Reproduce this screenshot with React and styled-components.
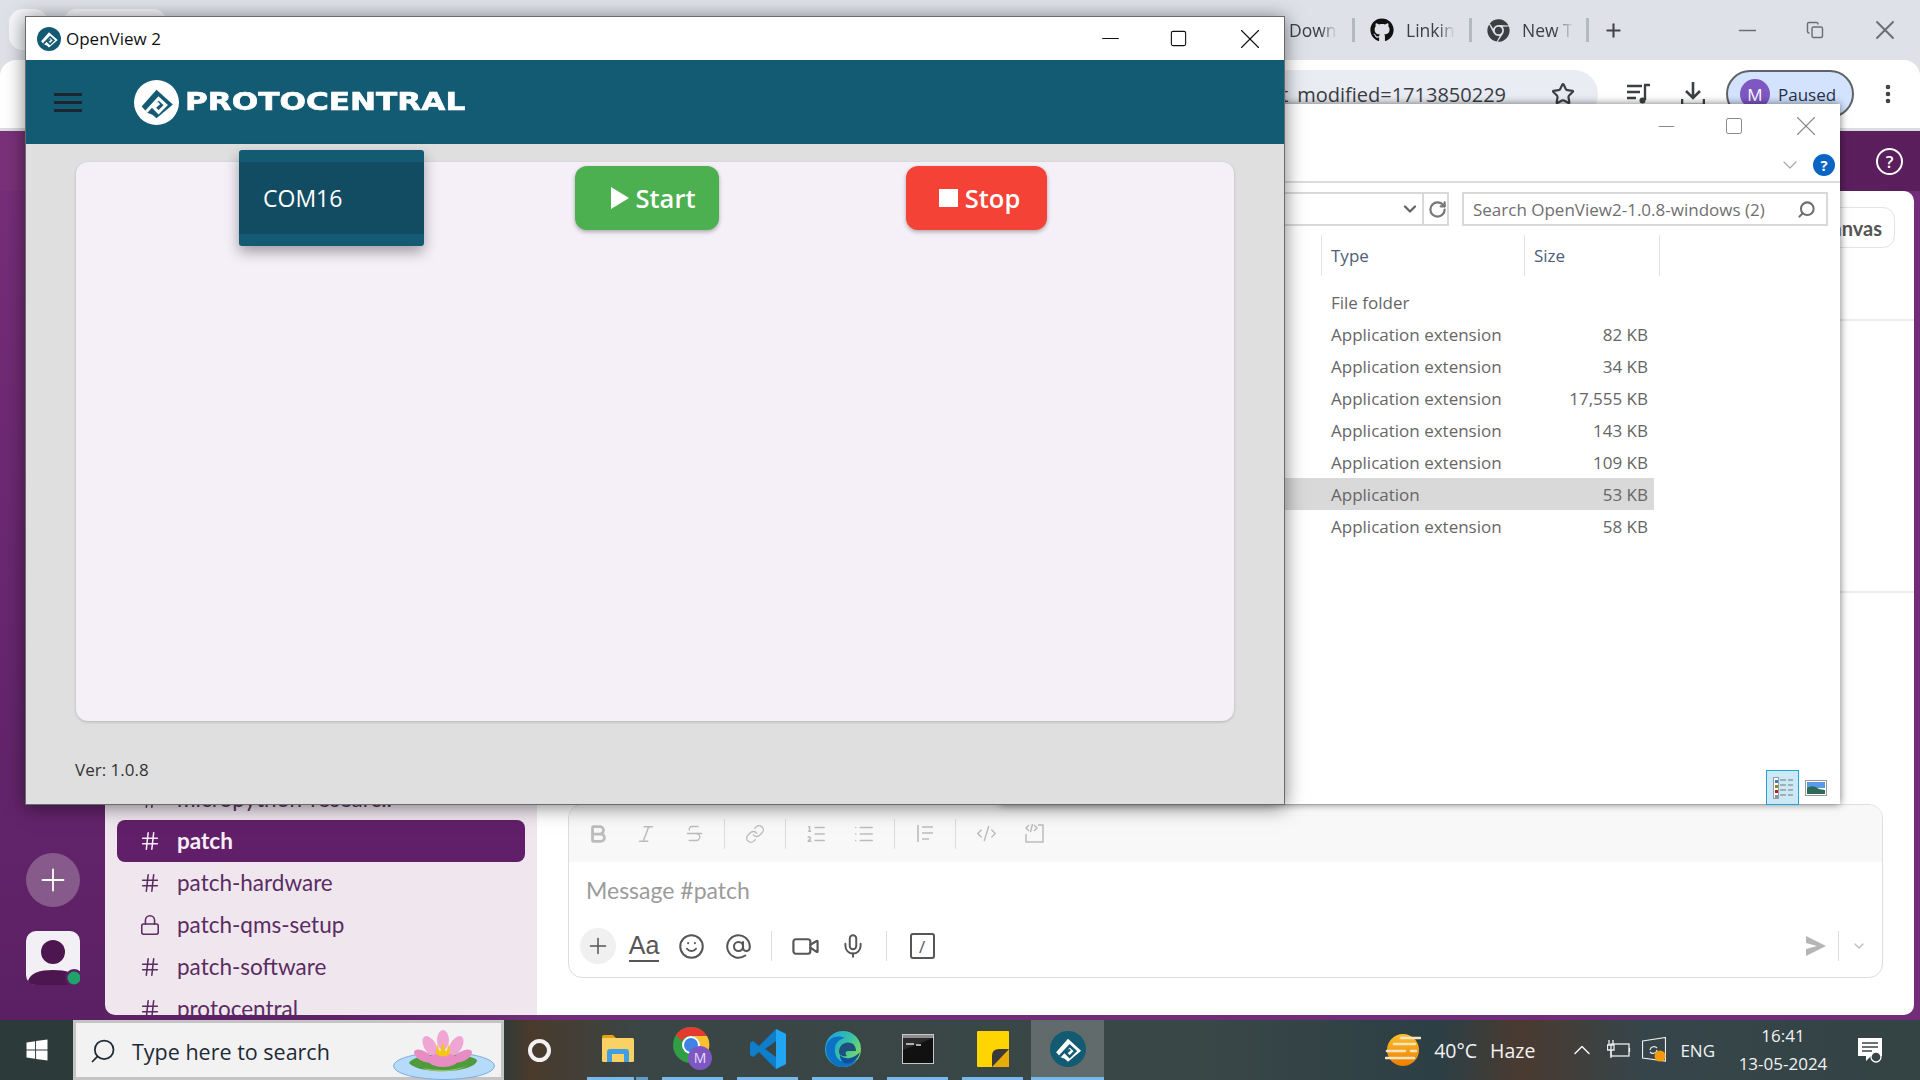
import React from "react";
import styled, { createGlobalStyle } from "styled-components";
import {
  AtSign,
  Bold,
  ChevronDown,
  ChevronUp,
  CodeXml,
  Copy,
  EllipsisVertical,
  Hash,
  Italic,
  Link,
  List,
  ListOrdered,
  Lock,
  Mic,
  Minus,
  Plus,
  RotateCw,
  Search,
  Smile,
  Square,
  Star,
  Strikethrough,
  Video,
  X,
} from "lucide-react";
import { FaChrome, FaGithub, FaWindows } from "react-icons/fa";

const GlobalStyle = createGlobalStyle`
  html, body {
    margin: 0;
    padding: 0;
    width: 1920px;
    height: 1080px;
    overflow: hidden;
    font-family: "Open Sans", sans-serif;
  }
  * { box-sizing: border-box; }
`;

const Desktop = styled.div`
  position: relative;
  width: 1920px;
  height: 1080px;
  display: flex;
  flex-direction: column;
  background: #dee1e8;
  overflow: hidden;
`;

/* browser chrome */
const TabStrip = styled.div`
  height: 60px;
  display: flex;
  align-items: center;
  color: #555a60;
`;
const PinnedTabs = styled.div`
  flex: 0 0 1289px;
  align-self: flex-start;
  display: flex;
  gap: 15px;
  padding: 9px 0 0 9px;
`;
const PinnedTab = styled.div`
  width: ${(p) => p.$w}px;
  height: 41px;
  background: #f5f6f8;
  border-radius: 14px;
`;
const Tab = styled.div`
  width: ${(p) => p.$w}px;
  display: flex;
  align-items: center;
  gap: 12px;
  padding-left: ${(p) => p.$pad || 0}px;
  font-size: 17.5px;
  color: #3c4043;
`;
const TabLabel = styled.span`
  white-space: nowrap;
  -webkit-mask-image: linear-gradient(90deg, #000 65%, transparent);
  mask-image: linear-gradient(90deg, #000 65%, transparent);
`;
const TabSep = styled.div`
  width: 3px;
  height: 24px;
  background: #b4b8bf;
`;
const NewTab = styled.div`
  margin-left: 14px;
  display: flex;
  color: #444;
`;
const WinButtons = styled.div`
  margin-left: auto;
  padding-right: 19px;
  display: flex;
  align-items: center;
  gap: 45px;
  color: #6b6f75;
`;
const Toolbar = styled.div`
  height: 71px;
  background: #fff;
  border-radius: 16px 16px 0 0;
  border-bottom: 3px solid #dadce0;
  display: flex;
  align-items: center;
  padding-left: 120px;
`;
const AddressBar = styled.div`
  width: 1478px;
  height: 48px;
  border-radius: 24px;
  background: #e9ecf2;
  display: flex;
  align-items: center;
  justify-content: flex-end;
  gap: 45px;
  padding-right: 23px;
  font-size: 20px;
  color: #3a3d42;
`;
const ToolIcon = styled.div`
  display: flex;
  margin-left: ${(p) => p.$ml}px;
  color: #3c4043;
`;
const ProfilePill = styled.div`
  margin-left: 21px;
  width: 128px;
  height: 48px;
  border-radius: 24px;
  border: 2px solid #5f6368;
  background: #d3e3fd;
  display: flex;
  align-items: center;
  gap: 8px;
  padding-left: 12px;
  font-size: 17px;
  color: #26324a;
`;
const ProfileAvatar = styled.div`
  width: 30px;
  height: 30px;
  border-radius: 50%;
  background: #7e57c2;
  color: #fff;
  font-size: 17px;
  display: flex;
  align-items: center;
  justify-content: center;
`;

/* slack page behind the windows */
const SlackBody = styled.div`
  flex: 1;
  display: flex;
  flex-direction: column;
  min-height: 0;
  background: linear-gradient(90deg, #5d2165 0, #5d2165 300px, #712d79 560px, #722c79 100%);
`;
const SlackTop = styled.div`
  height: 60px;
  display: flex;
  align-items: center;
  justify-content: flex-end;
  padding-right: 17px;
  background: linear-gradient(90deg, #7a3179 0, #7a3179 200px, #5a1e5c 100%);
  color: #fff;
`;
const HelpRing = styled.div`
  width: 27px;
  height: 27px;
  border: 2px solid #fff;
  border-radius: 50%;
  font-size: 17px;
  font-weight: 600;
  display: flex;
  align-items: center;
  justify-content: center;
`;
const SlackRow = styled.div`
  flex: 1;
  min-height: 0;
  display: flex;
  padding: 0 6px 5px 0;
`;
const Rail = styled.div`
  width: 105px;
  display: flex;
  flex-direction: column;
  justify-content: flex-end;
  gap: 24px;
  padding: 0 0 35px 26px;
  background: linear-gradient(180deg, #762e79, #5b2064);
  margin-bottom: -5px;
`;
const RailAdd = styled.div`
  width: 54px;
  height: 54px;
  border-radius: 50%;
  background: #875a8c;
  color: #fff;
  display: flex;
  align-items: center;
  justify-content: center;
`;
const Sidebar = styled.div`
  width: 432px;
  flex-shrink: 0;
  overflow: hidden;
  padding: 587px 12px 0 12px;
  background: #efe6ee;
  border-radius: 10px 0 0 10px;
  font-family: Lato, sans-serif;
  font-size: 22.5px;
  color: #5b2c62;
`;
const Channel = styled.div`
  height: 42px;
  flex-shrink: 0;
  display: flex;
  align-items: center;
  gap: 16px;
  padding: 0 0 1px 22px;
  border-radius: 8px;
  background: ${(p) => (p.$active ? "#611f69" : "transparent")};
  color: ${(p) => (p.$active ? "#f6eef6" : "inherit")};
  font-weight: ${(p) => (p.$active ? 700 : 400)};
`;
const SlackMain = styled.div`
  flex: 1;
  min-width: 0;
  display: flex;
  flex-direction: column;
  background: #fff;
  border-radius: 0 10px 10px 0;
  padding-bottom: 37px;
`;
const ChannelHeader = styled.div`
  height: 130px;
  border-bottom: 2px solid #ececec;
  display: flex;
  justify-content: flex-end;
  align-items: flex-start;
  padding: 16px 19px 0 0;
`;
const CanvasChip = styled.div`
  height: 41px;
  padding: 0 12px;
  border: 1px solid #e4e4e4;
  border-radius: 12px;
  font-family: Lato, sans-serif;
  font-size: 20px;
  font-weight: 700;
  color: #555;
  display: flex;
  align-items: center;
`;
const History = styled.div`
  height: 272px;
  border-bottom: 2px solid #ececec;
`;
const Composer = styled.div`
  margin: auto 31px 0;
  height: 174px;
  border: 1px solid #dedede;
  border-radius: 14px;
  overflow: hidden;
  display: flex;
  flex-direction: column;
`;
const FormatBar = styled.div`
  height: 57px;
  flex-shrink: 0;
  background: #f8f8f8;
  display: flex;
  align-items: center;
  padding-left: 14px;
  color: #bcbcbc;
`;
const Slots = styled.div`
  display: flex;
  align-items: center;
  gap: ${(p) => p.$gap}px;
`;
const Slot = styled.div`
  width: 30px;
  display: flex;
  justify-content: center;
`;
const VSep = styled.div`
  width: 1px;
  height: 30px;
  margin: 0 ${(p) => p.$m}px;
  background: #dcdcdc;
`;
const MessageText = styled.div`
  height: 55px;
  padding-left: 17px;
  display: flex;
  align-items: center;
  font-family: Lato, sans-serif;
  font-size: 23px;
  color: #9b9b9b;
`;
const ComposerActions = styled.div`
  flex: 1;
  display: flex;
  align-items: center;
  padding: 0 15px 2px 11px;
  color: #565656;
`;
const ComposerAdd = styled.div`
  width: 36px;
  height: 36px;
  margin-right: 13px;
  border-radius: 50%;
  background: #f0f0f0;
  display: flex;
  align-items: center;
  justify-content: center;
`;
const FontToggle = styled.span`
  font-family: "Liberation Sans", sans-serif;
  font-size: 25px;
  line-height: 29px;
  border-bottom: 2px solid #565656;
  color: #565656;
`;
const SlashBox = styled.div`
  width: 25px;
  height: 26px;
  margin-left: 4px;
  border: 2px solid #565656;
  border-radius: 3px;
  display: flex;
  align-items: center;
  justify-content: center;
  font-size: 17px;
  line-height: 1;
`;
const SendGroup = styled.div`
  margin-left: auto;
  display: flex;
  align-items: center;
  color: #bdbdbd;
`;

/* file explorer window */
const Explorer = styled.div`
  position: absolute;
  left: 1000px;
  top: 104px;
  width: 840px;
  height: 700px;
  background: #fff;
  box-shadow: 0 0 8px rgba(0, 0, 0, 0.55);
  display: flex;
  flex-direction: column;
  color: #666;
  font-size: 17px;
`;
const ExplorerTitle = styled.div`
  height: 44px;
  flex-shrink: 0;
  display: flex;
  align-items: center;
  justify-content: flex-end;
  gap: 45px;
  padding-right: 17px;
  color: #8a8a8a;
`;
const ExplorerRibbon = styled.div`
  height: 35px;
  flex-shrink: 0;
  border-bottom: 2px solid #dcdcdc;
  display: flex;
  align-items: center;
  justify-content: flex-end;
  gap: 11px;
  padding: 0 5px 0 0;
  color: #a9a9a9;
`;
const RibbonHelp = styled.div`
  width: 22px;
  height: 22px;
  border-radius: 50%;
  background: #0a64c4;
  color: #fff;
  font-size: 15px;
  font-weight: 700;
  display: flex;
  align-items: center;
  justify-content: center;
`;
const PathRow = styled.div`
  height: 34px;
  margin-top: 9px;
  flex-shrink: 0;
  display: flex;
  gap: 13px;
  padding-right: 12px;
`;
const PathBox = styled.div`
  flex: 1;
  border: 2px solid #d9d9d9;
  display: flex;
  align-items: center;
  justify-content: flex-end;
  color: #666;
`;
const PathRefresh = styled.div`
  width: 25px;
  height: 100%;
  margin-left: 2px;
  padding-left: 3px;
  border-left: 2px solid #d9d9d9;
  display: flex;
  align-items: center;
  justify-content: center;
`;
const SearchField = styled.div`
  width: 366px;
  border: 2px solid #d9d9d9;
  display: flex;
  align-items: center;
  justify-content: space-between;
  padding: 0 10px 0 9px;
  color: #6f6f6f;
  white-space: nowrap;
`;
const ColumnHeader = styled.div`
  height: 41px;
  margin-top: 9px;
  flex-shrink: 0;
  display: flex;
  color: #4c607a;
`;
const Column = styled.div`
  width: ${(p) => p.$w}px;
  padding-left: 9px;
  display: flex;
  align-items: center;
  border-left: ${(p) => (p.$plain ? "none" : "1px solid #e2e2e2")};
`;
const FileRows = styled.div`
  margin-top: 10px;
  width: 654px;
`;
const FileRow = styled.div`
  height: 32px;
  display: grid;
  grid-template-columns: 331px 1fr auto;
  align-items: center;
  padding-right: 6px;
  background: ${(p) => (p.$selected ? "#d9d9d9" : "transparent")};
`;
const ViewButtons = styled.div`
  margin-top: auto;
  margin-bottom: -1px;
  display: flex;
  justify-content: flex-end;
  align-items: center;
  gap: 6px;
  padding-right: 13px;
`;
const ViewButton = styled.div`
  width: ${(p) => (p.$on ? 33 : 22)}px;
  height: 35px;
  display: flex;
  align-items: center;
  justify-content: center;
  background: ${(p) => (p.$on ? "#cbe8f6" : "transparent")};
  border: ${(p) => (p.$on ? "1px solid #26a0da" : "none")};
`;

/* openview window */
const OpenViewWindow = styled.div`
  position: absolute;
  left: 25px;
  top: 16px;
  width: 1260px;
  height: 789px;
  border: 1px solid #6b6b6b;
  display: flex;
  flex-direction: column;
  background: #dfdfdf;
  box-shadow: 0 2px 18px rgba(0, 0, 0, 0.5);
`;
const TitleBar = styled.div`
  height: 43px;
  flex-shrink: 0;
  background: #fff;
  display: flex;
  align-items: center;
  padding-left: 11px;
  gap: 5px;
  font-size: 17px;
  color: #111;
`;
const TitleButtons = styled.div`
  margin-left: auto;
  padding-right: 17px;
  display: flex;
  align-items: center;
  gap: 45px;
  color: #111;
`;
const AppHeader = styled.div`
  height: 84px;
  flex-shrink: 0;
  background: #135a73;
  display: flex;
  align-items: center;
  padding-left: 28px;
`;
const Hamburger = styled.div`
  width: 28px;
  display: flex;
  flex-direction: column;
  gap: 5px;
`;
const HamburgerBar = styled.div`
  height: 3px;
  background: #1a2630;
`;
const Brand = styled.div`
  margin-left: 52px;
  display: flex;
  align-items: center;
  gap: 6px;
`;
const BrandName = styled.span`
  font-family: "DejaVu Sans", sans-serif;
  font-weight: 700;
  font-size: 24px;
  line-height: 1;
  color: #fff;
  -webkit-text-stroke: 0.6px #fff;
  transform: scaleX(1.297);
  transform-origin: left center;
  white-space: nowrap;
`;
const AppBody = styled.div`
  flex: 1;
  min-height: 0;
  display: flex;
  flex-direction: column;
  padding: 18px 50px 0 50px;
`;
const Card = styled.div`
  position: relative;
  height: 559px;
  flex-shrink: 0;
  background: #f5f0f8;
  border-radius: 12px;
  box-shadow: 0 1px 3px rgba(0, 0, 0, 0.2);
  padding: 4px 0 0 499px;
  display: flex;
  align-items: flex-start;
  gap: 187px;
`;
const PortMenu = styled.div`
  position: absolute;
  left: 163px;
  top: -12px;
  width: 185px;
  padding: 12px 0;
  background: #135a73;
  border-radius: 3px;
  box-shadow: 0 6px 14px rgba(0, 0, 0, 0.35);
`;
const PortItem = styled.div`
  height: 72px;
  padding-left: 24px;
  display: flex;
  align-items: center;
  background: #124c62;
  color: #fff;
  font-size: 23px;
`;
const ActionButton = styled.div`
  width: ${(p) => p.$w}px;
  height: 64px;
  padding-left: ${(p) => p.$pad}px;
  border-radius: 12px;
  background: ${(p) => p.$bg};
  box-shadow: 0 2px 4px rgba(0, 0, 0, 0.3);
  color: #fff;
  font-size: 25.5px;
  font-weight: 600;
  display: flex;
  align-items: center;
  justify-content: center;
  gap: 7px;
`;
const Version = styled.div`
  margin: auto 0 23px -1px;
  font-size: 17px;
  color: #333;
`;

/* taskbar */
const Taskbar = styled.div`
  height: 60px;
  flex-shrink: 0;
  display: flex;
  align-items: stretch;
  background: linear-gradient(90deg, #2d3a3a 0, #2e3a3a 500px, #4a3a2c 530px, #3a4646 640px, #3a4747 1200px, #2c3f45 1440px, #4a3a30 1520px, #36454a 1640px, #344444 100%);
  color: #f2f2f2;
`;
const StartButton = styled.div`
  width: 73px;
  display: flex;
  align-items: center;
  justify-content: center;
  color: #fff;
`;
const TaskSearch = styled.div`
  width: 431px;
  border: 3px solid #c4c4c4;
  background: #f2f2f2;
  display: flex;
  align-items: center;
  gap: 15px;
  padding: 2px 0 0 13px;
  font-size: 21.5px;
  color: #1e2a36;
  position: relative;
`;
const Lily = styled.svg`
  position: absolute;
  right: 6px;
  bottom: -3px;
`;
const Cortana = styled.div`
  width: 83px;
  display: flex;
  align-items: center;
  padding-left: 24px;
`;
const CortanaRing = styled.div`
  width: 23px;
  height: 23px;
  border: 4px solid #f2f2f2;
  border-radius: 50%;
`;
const TaskApps = styled.div`
  display: flex;
  gap: 14px;
`;
const TaskApp = styled.div`
  width: ${(p) => (p.$active ? 73 : 61)}px;
  margin-left: ${(p) => (p.$active ? -6 : 0)}px;
  display: flex;
  flex-direction: column;
  background: ${(p) => (p.$active ? "rgba(255,255,255,0.2)" : "transparent")};
`;
const TaskIcon = styled.div`
  flex: 1;
  display: flex;
  align-items: center;
  justify-content: center;
`;
const TaskUnderline = styled.div`
  height: 3px;
  background: ${(p) =>
    p.$split
      ? "linear-gradient(90deg, #76b9ed 47px, transparent 47px, transparent 49px, #5f9cc9 49px)"
      : "#76b9ed"};
`;
const Tray = styled.div`
  margin-left: auto;
  padding-right: 38px;
  display: flex;
  align-items: center;
  font-size: 19.5px;
`;
const Weather = styled.div`
  display: flex;
  align-items: center;
  gap: 13px;
  margin-right: 33px;
`;
const TrayIcons = styled.div`
  display: flex;
  align-items: center;
  gap: 11px;
  margin-right: 14px;
`;
const Lang = styled.span`
  font-size: 17px;
  margin-right: 21px;
`;
const Clock = styled.div`
  width: 94px;
  margin-right: 28px;
  text-align: center;
  font-size: 17px;
  line-height: 28px;
`;

/* the drawn marks */
const ProtoMark = ({ size, bg, fg }) => (
  <svg width={size} height={size} viewBox="0 0 44 44">
    <circle cx="22" cy="22" r="22" fill={bg} />
    <path d="M7.5 26 L22 9.5 L38 24 L22 37.5 L18 34 L13 32Z" fill={fg} />
    <path d="M12 31 L24 18 L31 24.5 L24 31.5 L19.5 27 L24.5 22.5" fill="none" stroke={bg} strokeWidth="3" />
  </svg>
);

const ChromeBadge = () => (
  <svg width="40" height="44" viewBox="0 0 40 44">
    <circle cx="18" cy="18" r="18" fill="#2f9e44" />
    <path d="M18 0 A18 18 0 0 1 34 9 L18 9 A9 9 0 0 0 9 14 L3 8 A18 18 0 0 1 18 0Z" fill="#e53a2f" />
    <path d="M34 9 A18 18 0 0 1 24 35 L26 22 A9 9 0 0 0 18 9Z" fill="#fbc02d" />
    <circle cx="18" cy="18" r="9" fill="#fff" />
    <circle cx="18" cy="18" r="7" fill="#3f83e6" />
    <circle cx="27" cy="31" r="12" fill="#7e57c2" />
    <text x="27" y="36" textAnchor="middle" fontSize="14" fontFamily="Open Sans" fill="#e8dcf8">M</text>
  </svg>
);

const VsCodeMark = () => (
  <svg width="36" height="42" viewBox="0 0 36 42">
    <path d="M26 1 L9 18 L3 13 L0 15 V27 L3 29 L9 24 L26 41 L36 36 V6 Z" fill="#0f7fcc" />
    <path d="M26 13 L15 21 L26 29 Z" fill="#394646" />
    <path d="M26 1 L36 6 V36 L26 41 Z" fill="#20a6f3" />
  </svg>
);

const EdgeMark = () => (
  <svg width="36" height="38" viewBox="0 0 36 38">
    <defs>
      <linearGradient id="edgeTop" x1="0" y1="0" x2="1" y2="0.6">
        <stop offset="0" stopColor="#1b9de2" />
        <stop offset="0.6" stopColor="#35c1a8" />
        <stop offset="1" stopColor="#7ddb5f" />
      </linearGradient>
    </defs>
    <circle cx="18" cy="19" r="18" fill="url(#edgeTop)" />
    <path d="M1 19 C1 8 12 4 20 8 C13 9 9 15 10 22 C11 31 21 36 33 29 C29 34 24 37 18 37 C8 37 1 29 1 19Z" fill="#0c72c8" />
    <path d="M14 22 C14 15 20 11 26 13 C29 14 31 17 31 21 H23 C20 21 20 24 22 26 C18 27 14 25 14 22Z" fill="#1f4f7c" />
    <path d="M15 25 C20 31 30 28 35 22 C33 30 26 35 19 33 C16 31 15 28 15 25Z" fill="#0f4f9c" />
  </svg>
);

const ConsoleMark = () => (
  <svg width="32" height="30" viewBox="0 0 32 30">
    <rect x="0.5" y="0.5" width="31" height="29" fill="#111" stroke="#c8c8c8" />
    <rect x="1" y="1" width="30" height="3" fill="#8d8d8d" />
    <path d="M1 4 H31 L1 16Z" fill="#2b2b2b" />
    <path d="M4 10 H12 M14 11 H19" stroke="#ddd" strokeWidth="1.5" />
  </svg>
);

const StickyMark = () => (
  <svg width="32" height="36" viewBox="0 0 32 36">
    <path d="M1 0 H31 a1 1 0 0 1 1 1 V35 a1 1 0 0 1 -1 1 H1 a1 1 0 0 1 -1 -1 V1 a1 1 0 0 1 1 -1Z" fill="#ffd500" />
    <path d="M32 18 V35 a1 1 0 0 1 -1 1 H15 V25Z" fill="#e8ac08" />
    <path d="M32 18 L15 36 V25 Q15 18 22 18Z" fill="#3a3a3a" />
  </svg>
);

const FolderMark = () => (
  <svg width="32" height="28" viewBox="0 0 32 28">
    <path d="M0 2 Q0 0 2 0 H11 L14 3 H3 V6 H0Z" fill="#e5a50a" />
    <rect x="0" y="3" width="32" height="24" rx="1.5" fill="#fad165" />
    <path d="M5 27 V17 Q5 14 8 14 H24 Q27 14 27 17 V27 H22 V19 H10 V27Z" fill="#3f9fe0" />
  </svg>
);

const LilyMark = () => (
  <Lily width="102" height="50" viewBox="0 0 102 50">
    <ellipse cx="51" cy="36" rx="50.5" ry="13.5" fill="#b6dafa" stroke="#7aaede" />
    <path d="M16 33 C22 22 74 22 84 30 C84 36 70 41 50 41 C32 41 20 38 16 33Z" fill="#4f9a3a" />
    <path d="M30 38 C44 41 64 41 74 35 C66 42 40 44 30 38Z" fill="#8fc46a" />
    <g fill="#f0a6d4">
      <ellipse cx="50" cy="10" rx="6" ry="10" />
      <ellipse cx="37" cy="16" rx="6" ry="11" transform="rotate(-30 37 16)" />
      <ellipse cx="63" cy="16" rx="6" ry="11" transform="rotate(30 63 16)" />
    </g>
    <g fill="#e88cc4">
      <ellipse cx="30" cy="26" rx="5" ry="10" transform="rotate(-60 30 26)" />
      <ellipse cx="70" cy="26" rx="5" ry="10" transform="rotate(60 70 26)" />
      <ellipse cx="50" cy="30" rx="15" ry="7" />
    </g>
    <path d="M43 24 L44 14 L47 22 L50 12 L53 22 L56 14 L57 24 Q50 29 43 24Z" fill="#f5c518" />
  </Lily>
);

const SunMark = () => (
  <svg width="36" height="36" viewBox="0 0 36 36">
    <defs>
      <linearGradient id="sunFill" x1="0" y1="0" x2="0" y2="1">
        <stop offset="0" stopColor="#fbc02d" />
        <stop offset="1" stopColor="#ef7d00" />
      </linearGradient>
    </defs>
    <circle cx="18" cy="18" r="16" fill="url(#sunFill)" />
    <g stroke="#f6e4c0" strokeWidth="2.6" strokeLinecap="round">
      <path d="M16 6 H35" />
      <path d="M9 12 H30" />
      <path d="M2 19 H20 M26 19 H31" />
      <path d="M1 26 H29" />
    </g>
  </svg>
);

const BatteryMark = () => (
  <svg width="24" height="20" viewBox="0 0 24 20" fill="none" stroke="#eee" strokeWidth="1.3">
    <rect x="4" y="4" width="18" height="12" />
    <path d="M22.5 8 V12 M2 0 V5 M6 0 V5 M0.5 5 H7 V10 H0.5Z M4 10 V18" />
  </svg>
);

const SyncMark = () => (
  <svg width="24" height="26" viewBox="0 0 24 26" fill="none" stroke="#eee" strokeWidth="1.2">
    <path d="M0.5 4 L23.5 0.5 V24 L0.5 21Z" />
    <path d="M8 13 a4 4 0 0 1 7 -2 M15 13 a4 4 0 0 1 -7 2" />
    <circle cx="18" cy="19" r="5.5" fill="#f59a0c" stroke="none" />
  </svg>
);

const NoticeMark = () => (
  <svg width="24" height="25" viewBox="0 0 24 25">
    <path d="M0 0 H24 V18 H13 L8 23 V18 H0Z" fill="#fff" />
    <path d="M4 5 H20 M4 9 H20 M4 13 H14" stroke="#3a4646" strokeWidth="1.5" />
    <circle cx="18" cy="19" r="5" fill="#3a4646" stroke="#fff" strokeWidth="1.3" />
  </svg>
);

const PersonMark = () => (
  <svg width="54" height="54" viewBox="0 0 54 54">
    <rect width="54" height="54" rx="10" fill="#f3f0f5" />
    <circle cx="27" cy="21" r="12" fill="#4e1650" />
    <path d="M2 50 C4 42 14 39 27 39 C40 39 50 42 52 50 Q50 54 44 54 H10 Q4 54 2 50Z" fill="#4e1650" />
    <circle cx="48" cy="47" r="9" fill="#5b2064" />
    <circle cx="48" cy="47" r="6.5" fill="#1fa36a" />
  </svg>
);

const SendMark = () => (
  <svg width="20" height="20" viewBox="0 0 20 20">
    <path d="M0 0 L20 10 L0 20 V13 L11 10 L0 7Z" fill="#b5b5b5" />
  </svg>
);

const MusicQueueMark = () => (
  <svg width="24" height="24" viewBox="0 0 24 24" fill="none" stroke="#3c4043" strokeWidth="2.4">
    <path d="M0 4 H15 M0 10 H13 M0 16 H9 M18 3 V18 M17 3 H23" />
    <circle cx="15.5" cy="18.5" r="3" fill="#3c4043" stroke="none" />
  </svg>
);

const QuoteMark = () => (
  <svg width="21" height="21" viewBox="0 0 21 21" fill="none" stroke="currentColor" strokeWidth="1.6">
    <path d="M3 2 V19 M7 4 H18 M7 10 H18 M7 16 H14" />
  </svg>
);

const DetailsMark = () => (
  <svg width="20" height="22" viewBox="0 0 20 22">
    <rect x="0.5" y="0.5" width="5" height="21" fill="#fff" stroke="#9a9a9a" />
    <path d="M2 3 h3 v3 h-3z" fill="#3a7fc4" />
    <path d="M2 8 h3 v3 h-3z" fill="#8a8a20" />
    <path d="M2 13 h3 v3 h-3z" fill="#b82020" />
    <path d="M2 18 h3 v3 h-3z" fill="#70a0a0" />
    <path d="M7 3 H13 M15 3 H20 M7 8 H13 M15 8 H20 M7 13 H13 M15 13 H20 M7 18 H13 M15 18 H20" stroke="#777" strokeWidth="1.2" />
  </svg>
);

const PreviewMark = () => (
  <svg width="22" height="16" viewBox="0 0 22 16">
    <rect x="0.5" y="0.5" width="21" height="15" fill="#fff" stroke="#9a9a9a" />
    <rect x="2" y="2" width="18" height="6" fill="#5b9be6" />
    <path d="M2 8 Q8 4 14 9 L20 10 V14 H2Z" fill="#2d6a5a" />
  </svg>
);

const fileRows = [
  { type: "File folder", size: "" },
  { type: "Application extension", size: "82 KB" },
  { type: "Application extension", size: "34 KB" },
  { type: "Application extension", size: "17,555 KB" },
  { type: "Application extension", size: "143 KB" },
  { type: "Application extension", size: "109 KB" },
  { type: "Application", size: "53 KB", selected: true },
  { type: "Application extension", size: "58 KB" },
];

const channels = [
  { name: "micropython-researc..", icon: Hash },
  { name: "patch", icon: Hash, active: true },
  { name: "patch-hardware", icon: Hash },
  { name: "patch-qms-setup", icon: Lock },
  { name: "patch-software", icon: Hash },
  { name: "protocentral", icon: Hash },
];

const taskApps = [
  { mark: <FolderMark />, split: true },
  { mark: <ChromeBadge /> },
  { mark: <VsCodeMark /> },
  { mark: <EdgeMark /> },
  { mark: <ConsoleMark /> },
  { mark: <StickyMark /> },
  { mark: <ProtoMark size={36} bg="#135a73" fg="#fff" />, active: true },
];

export default function App() {
  return (
    <Desktop>
      <GlobalStyle />
      <TabStrip>
        <PinnedTabs>
          <PinnedTab $w={39} />
          <PinnedTab $w={104} />
        </PinnedTabs>
        <Tab $w={63}>
          <TabLabel>Down</TabLabel>
        </Tab>
        <TabSep />
        <Tab $w={114} $pad={15}>
          <FaGithub size={24} color="#111" />
          <TabLabel>Linkin</TabLabel>
        </Tab>
        <TabSep />
        <Tab $w={114} $pad={15}>
          <FaChrome size={23} color="#3c4043" />
          <TabLabel>New T</TabLabel>
        </Tab>
        <TabSep />
        <NewTab>
          <Plus size={21} strokeWidth={2.4} />
        </NewTab>
        <WinButtons>
          <Minus size={27} strokeWidth={1.4} />
          <Copy size={18} strokeWidth={1.9} />
          <X size={32} strokeWidth={1.4} />
        </WinButtons>
      </TabStrip>
      <Toolbar>
        <AddressBar>
          <span>OpenView2-1.0.8-windows.zip?last_modified=1713850229</span>
          <Star size={24} strokeWidth={2.2} color="#3c4043" />
        </AddressBar>
        <ToolIcon $ml={29}>
          <MusicQueueMark />
        </ToolIcon>
        <ToolIcon $ml={30}>
          <svg width="24" height="24" viewBox="0 0 24 24" fill="none" stroke="#3c4043" strokeWidth="2.6">
            <path d="M12 0 V15 M5 9 L12 16 L19 9 M1 17 V23 H23 V17" />
          </svg>
        </ToolIcon>
        <ProfilePill>
          <ProfileAvatar>M</ProfileAvatar>
          Paused
        </ProfilePill>
        <ToolIcon $ml={22}>
          <EllipsisVertical size={24} strokeWidth={2.6} />
        </ToolIcon>
      </Toolbar>

      <SlackBody>
        <SlackTop>
          <HelpRing>?</HelpRing>
        </SlackTop>
        <SlackRow>
          <Rail>
            <RailAdd>
              <Plus size={36} strokeWidth={1.2} />
            </RailAdd>
            <PersonMark />
          </Rail>
          <Sidebar>
            {channels.map((c) => (
              <Channel key={c.name} $active={c.active}>
                <c.icon size={22} strokeWidth={1.7} />
                {c.name}
              </Channel>
            ))}
          </Sidebar>
          <SlackMain>
            <ChannelHeader>
              <CanvasChip>Canvas</CanvasChip>
            </ChannelHeader>
            <History />
            <Composer>
              <FormatBar>
                <Slots $gap={18}>
                  <Slot><Bold size={22} strokeWidth={3} /></Slot>
                  <Slot><Italic size={22} strokeWidth={1.6} /></Slot>
                  <Slot><Strikethrough size={21} strokeWidth={1.6} /></Slot>
                </Slots>
                <VSep $m={15} />
                <Slot><Link size={20} strokeWidth={1.6} /></Slot>
                <VSep $m={15} />
                <Slots $gap={18}>
                  <Slot><ListOrdered size={22} strokeWidth={1.6} /></Slot>
                  <Slot><List size={22} strokeWidth={1.6} /></Slot>
                </Slots>
                <VSep $m={15} />
                <Slot><QuoteMark /></Slot>
                <VSep $m={15} />
                <Slots $gap={18}>
                  <Slot><CodeXml size={21} strokeWidth={1.6} /></Slot>
                  <Slot>
                    <svg width="21" height="21" viewBox="0 0 21 21" fill="none" stroke="currentColor" strokeWidth="1.5">
                      <path d="M14 2 H19 V19 H2 V11 M5 2 L2 5 L5 8 M10 2 L13 5 L10 8 M8.5 1 L6.5 9" />
                    </svg>
                  </Slot>
                </Slots>
              </FormatBar>
              <MessageText>Message #patch</MessageText>
              <ComposerActions>
                <ComposerAdd>
                  <Plus size={26} strokeWidth={1.4} />
                </ComposerAdd>
                <Slots $gap={17}>
                  <Slot><FontToggle>Aa</FontToggle></Slot>
                  <Slot><Smile size={27} strokeWidth={1.8} /></Slot>
                  <Slot><AtSign size={27} strokeWidth={1.8} /></Slot>
                </Slots>
                <VSep $m={18} />
                <Slots $gap={18}>
                  <Slot><Video size={29} strokeWidth={1.8} /></Slot>
                  <Slot><Mic size={26} strokeWidth={1.8} /></Slot>
                </Slots>
                <VSep $m={18} />
                <Slot><SlashBox>/</SlashBox></Slot>
                <SendGroup>
                  <SendMark />
                  <VSep $m={12} />
                  <ChevronDown size={16} strokeWidth={2} />
                </SendGroup>
              </ComposerActions>
            </Composer>
          </SlackMain>
        </SlackRow>
      </SlackBody>

      <Taskbar>
        <StartButton>
          <FaWindows size={24} />
        </StartButton>
        <TaskSearch>
          <Search size={28} strokeWidth={1.5} style={{ transform: "scaleX(-1)" }} />
          Type here to search
          <LilyMark />
        </TaskSearch>
        <Cortana>
          <CortanaRing />
        </Cortana>
        <TaskApps>
          {taskApps.map((app, i) => (
            <TaskApp key={i} $active={app.active}>
              <TaskIcon>{app.mark}</TaskIcon>
              <TaskUnderline $split={app.split} />
            </TaskApp>
          ))}
        </TaskApps>
        <Tray>
          <Weather>
            <SunMark />
            <span>40°C</span>
            <span>Haze</span>
          </Weather>
          <TrayIcons>
            <ChevronUp size={28} strokeWidth={1.3} />
            <BatteryMark />
            <SyncMark />
          </TrayIcons>
          <Lang>ENG</Lang>
          <Clock>
            <div>16:41</div>
            <div>13-05-2024</div>
          </Clock>
          <NoticeMark />
        </Tray>
      </Taskbar>

      <Explorer>
        <ExplorerTitle>
          <Minus size={25} strokeWidth={1} />
          <Square size={20} strokeWidth={1.2} />
          <X size={34} strokeWidth={0.8} />
        </ExplorerTitle>
        <ExplorerRibbon>
          <ChevronDown size={24} strokeWidth={1.2} />
          <RibbonHelp>?</RibbonHelp>
        </ExplorerRibbon>
        <PathRow>
          <PathBox>
            <ChevronDown size={20} strokeWidth={2.8} />
            <PathRefresh>
              <RotateCw size={19} strokeWidth={2.8} color="#777" />
            </PathRefresh>
          </PathBox>
          <SearchField>
            Search OpenView2-1.0.8-windows (2)
            <Search size={19} strokeWidth={2.6} style={{ transform: "scaleX(-1)" }} />
          </SearchField>
        </PathRow>
        <ColumnHeader>
          <Column $w={321} $plain />
          <Column $w={203}>Type</Column>
          <Column $w={135}>Size</Column>
          <Column $w={2} />
        </ColumnHeader>
        <FileRows>
          {fileRows.map((row, i) => (
            <FileRow key={i} $selected={row.selected}>
              <span />
              <span>{row.type}</span>
              <span>{row.size}</span>
            </FileRow>
          ))}
        </FileRows>
        <ViewButtons>
          <ViewButton $on>
            <DetailsMark />
          </ViewButton>
          <ViewButton>
            <PreviewMark />
          </ViewButton>
        </ViewButtons>
      </Explorer>

      <OpenViewWindow>
        <TitleBar>
          <ProtoMark size={24} bg="#135a73" fg="#fff" />
          OpenView 2
          <TitleButtons>
            <Minus size={27} strokeWidth={1} />
            <Square size={19} strokeWidth={1.4} />
            <X size={34} strokeWidth={0.8} />
          </TitleButtons>
        </TitleBar>
        <AppHeader>
          <Hamburger>
            <HamburgerBar />
            <HamburgerBar />
            <HamburgerBar />
          </Hamburger>
          <Brand>
            <ProtoMark size={45} bg="#fff" fg="#135a73" />
            <BrandName>PROTOCENTRAL</BrandName>
          </Brand>
        </AppHeader>
        <AppBody>
          <Card>
            <PortMenu>
              <PortItem>COM16</PortItem>
            </PortMenu>
            <ActionButton $w={144} $pad={12} $bg="#4caf50">
              <svg width="18" height="22" viewBox="0 0 18 22">
                <path d="M0 0 L18 11 L0 22Z" fill="#fff" />
              </svg>
              Start
            </ActionButton>
            <ActionButton $w={141} $pad={6} $bg="#f44336">
              <svg width="19" height="18" viewBox="0 0 19 18">
                <rect width="19" height="18" fill="#fff" />
              </svg>
              Stop
            </ActionButton>
          </Card>
          <Version>Ver: 1.0.8</Version>
        </AppBody>
      </OpenViewWindow>
    </Desktop>
  );
}
